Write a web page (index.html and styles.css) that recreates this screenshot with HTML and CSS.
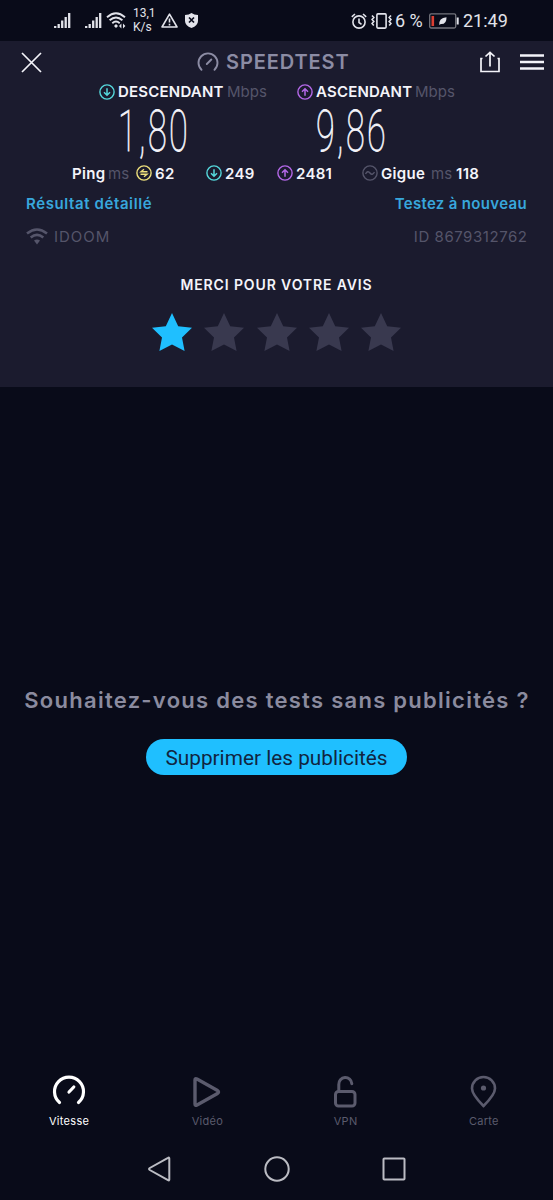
FILE: index.html
```html
<!DOCTYPE html>
<html lang="fr">
<head>
<meta charset="utf-8">
<title>Speedtest</title>
<link rel="stylesheet" href="styles.css">
</head>
<body>
<svg class="defs" width="0" height="0">
  <symbol id="signal" viewBox="0 0 17 17"><path d="M1.2 14v2M4.700 12v4M8.200 8.500v7.500M11.700 5v11M15.200 1v15" fill="none" stroke="currentColor" stroke-width="2.300"/></symbol>
  <symbol id="down" viewBox="0 0 16 16"><circle cx="8" cy="8" r="7.100" fill="none" stroke="currentColor" stroke-width="1.400"/><path d="M8 4.200v7M5 8.300l3 3 3-3" fill="none" stroke="currentColor" stroke-width="1.500"/></symbol>
  <symbol id="up" viewBox="0 0 16 16"><circle cx="8" cy="8" r="7.100" fill="none" stroke="currentColor" stroke-width="1.400"/><path d="M8 11.800v-7M5 7.700l3-3 3 3" fill="none" stroke="currentColor" stroke-width="1.500"/></symbol>
  <symbol id="star" viewBox="0 0 40 38"><path d="M20 0l6.200 13.200L40 14.800 30 24.500 32.600 38 20 31.400 7.400 38 10 24.500 0 14.800l13.800-1.600z" fill="currentColor"/></symbol>
</svg>
<header class="status">
  <svg class="sig1" width="17" height="17"><use href="#signal"/></svg>
  <svg class="sig2" width="17" height="17"><use href="#signal"/></svg>
  <svg class="swifi" width="20" height="17" viewBox="0 0 20 17" fill="none" stroke="currentColor" stroke-width="1.900"><path d="M1 5.200Q10-2.800 19 5.200M3.600 8.300Q10 2.600 16.400 8.300M6.300 11.200Q10 8 13.700 11.200"/><path d="M10 12l2 2-2 2-2-2z" fill="currentColor" stroke="none"/><path d="M15.400 11.500v5L13 14zM17 11.500v5l2.400-2.500z" fill="currentColor" stroke="none"/></svg>
  <div class="rate"><span>13,1</span><span>K/s</span></div>
  <svg class="warn" width="17" height="15" viewBox="0 0 17 15" fill="none" stroke="currentColor" stroke-width="1.600" stroke-linejoin="round"><path d="M8.500 1.200L16 14H1zM8.500 5.500v4M8.500 10.800v1.600"/></svg>
  <svg class="shield" width="13" height="15" viewBox="0 0 13 15"><path d="M6.500 0Q9 2 13 2v6q0 4.500-6.500 7Q0 12.500 0 8V2Q4 2 6.500 0z" fill="currentColor"/><path d="M4 4.500l5 5M9 4.500l-5 5" stroke="#0a0c1b" stroke-width="1.700"/></svg>
  <svg class="alarm" width="16" height="16" viewBox="0 0 16 16" fill="none" stroke="currentColor" stroke-width="1.600"><circle cx="8" cy="9" r="6.100"/><path d="M.8 3.800L4 1M15.200 3.800L12 1M8 5.500V9.500l2.500 1.800"/></svg>
  <svg class="vibrate" width="21" height="16" viewBox="0 0 21 16" fill="none" stroke="currentColor" stroke-width="1.600"><rect x="5.900" y=".9" width="9.200" height="14.200" rx="1"/><path d="M1 2.500l1.800 2L1 6.500l1.800 2L1 10.500l1.800 2M20 2.500l-1.800 2 1.800 2-1.800 2 1.800 2-1.800 2"/></svg>
  <span class="percent">6 %</span>
  <svg class="battery" width="30" height="16" viewBox="0 0 30 16"><rect x=".7" y=".8" width="26" height="14.200" rx="1.500" fill="none" stroke="#73747c" stroke-width="1.300"/><path d="M2.500 3h2.600v10H2.500z" fill="#dc3f32"/><path d="M28.700 4.500v7" stroke="#e2e3ea" stroke-width="2"/><path d="M10.300 12q-.8-7 7.200-7.800.2 7.300-5.700 6.900z" fill="#e2e3ea"/></svg>
  <time>21:49</time>
</header>
<main>
  <section class="panel">
    <div class="title">
      <svg class="close" width="21" height="21" viewBox="0 0 21 21"><path d="M1 1l19 19M20 1L1 20" stroke="currentColor" stroke-width="1.700"/></svg>
      <svg class="logo" width="22" height="20" viewBox="0 0 22 20" fill="none" stroke="currentColor" stroke-width="1.900" stroke-linecap="round"><path d="M4.500 17.800a9.500 9.500 0 1 1 13 0M9.800 12l4.500-4.500"/></svg>
      <h1>SPEEDTEST</h1>
      <svg class="share" width="20" height="22" viewBox="0 0 20 22" fill="none" stroke="currentColor" stroke-width="1.700"><path d="M2.500 7.500H1v13h18v-13h-1.500M10 15.500V1.500M5.500 5.500L10 1.300l4.500 4.200"/></svg>
      <svg class="menu" width="24" height="16" viewBox="0 0 24 16"><path d="M0 1.500h24M0 8h24M0 14.500h24" stroke="currentColor" stroke-width="2.400"/></svg>
    </div>
    <div class="speeds">
      <div class="speed">
        <div class="label"><svg class="teal" width="16" height="16"><use href="#down"/></svg><b class="desc">DESCENDANT</b><span>Mbps</span></div>
        <div class="value v1">1,80</div>
      </div>
      <div class="speed">
        <div class="label"><svg class="violet" width="16" height="16"><use href="#up"/></svg><b class="asc">ASCENDANT</b><span>Mbps</span></div>
        <div class="value v2">9,86</div>
      </div>
    </div>
    <div class="pings">
      <b class="ping">Ping</b><span class="ms1">ms</span>
      <svg class="yellow" width="16" height="16" viewBox="0 0 16 16" fill="none" stroke="currentColor" stroke-width="1.400"><circle cx="8" cy="8" r="7.100"/><path d="M11.500 6.700H5L8 4.200M4.500 9.300H11L8 11.800"/></svg><b class="n1">62</b>
      <svg class="teal" width="16" height="16"><use href="#down"/></svg><b class="n2">249</b>
      <svg class="violet" width="16" height="16"><use href="#up"/></svg><b class="n3">2481</b>
      <svg class="gray" width="16" height="16" viewBox="0 0 16 16" fill="none" stroke="currentColor" stroke-width="1.400"><circle cx="8" cy="8" r="7.100"/><path d="M3.500 9Q5.700 5 8 8t4.500-1"/></svg><b class="gigue">Gigue</b><span class="ms2">ms</span><b>118</b>
    </div>
    <div class="row links"><a>Résultat détaillé</a><a class="again">Testez à nouveau</a></div>
    <div class="row isp"><div class="net"><svg width="22" height="17" viewBox="0 0 22 17" fill="none" stroke="currentColor" stroke-width="2.600"><path d="M1 5.500Q11-2.500 21 5.500M4.700 9.600Q11 4.200 17.300 9.600"/><path d="M8 12.500q3-2 6 0L11 16.500z" fill="currentColor" stroke="none"/></svg><span class="idoom">IDOOM</span></div><span class="rid">ID 8679312762</span></div>
    <h2>MERCI POUR VOTRE AVIS</h2>
    <div class="stars">
      <svg class="on" width="40" height="38"><use href="#star"/></svg>
      <svg width="40" height="38"><use href="#star"/></svg>
      <svg width="40" height="38"><use href="#star"/></svg>
      <svg width="40" height="38"><use href="#star"/></svg>
      <svg width="40" height="38"><use href="#star"/></svg>
    </div>
  </section>
  <section class="offer">
    <p>Souhaitez-vous des tests sans publicités ?</p>
    <button>Supprimer les publicités</button>
  </section>
</main>
<nav class="tabs">
  <div class="tab active"><svg width="34" height="34" viewBox="0 0 34 34" fill="none" stroke="currentColor" stroke-width="3.200" stroke-linecap="round"><path d="M7.500 28.500a14.500 14.500 0 1 1 19 0M17 18l4.800-5"/></svg><span>Vitesse</span></div>
  <div class="tab"><svg width="34" height="34" viewBox="0 0 34 34" fill="none" stroke="currentColor" stroke-width="3.400" stroke-linejoin="round"><path d="M5 6q0-2 2-1L27.500 16.500q2 1.500 0 3L7 31q-2 1-2-1z"/></svg><span>Vidéo</span></div>
  <div class="tab"><svg width="34" height="34" viewBox="0 0 34 34" fill="none" stroke="currentColor" stroke-width="3" stroke-linecap="round"><rect x="6.500" y="17.500" width="19.500" height="14.500" rx="3"/><path d="M9.800 17v-6.500a6.500 6.500 0 0 1 13-.8"/></svg><span>VPN</span></div>
  <div class="tab"><svg width="34" height="34" viewBox="0 0 34 34" fill="none" stroke="currentColor" stroke-width="2.600"><path d="M16.500 32Q5 20.500 5 14.500a11.500 11.500 0 0 1 23 0Q28 20.500 16.500 32z"/><circle cx="16.500" cy="14" r="2.600" fill="currentColor" stroke="none"/></svg><span>Carte</span></div>
</nav>
<footer class="system">
  <svg width="26" height="28" viewBox="0 0 26 28"><path d="M22.300 3.500v21q0 1.500-1.300.7L2.800 15q-1.500-1 0-2L21 2.800q1.300-.8 1.300.7z"/></svg>
  <svg width="26" height="28" viewBox="0 0 26 28"><circle cx="13" cy="14" r="11.700"/></svg>
  <svg width="26" height="28" viewBox="0 0 26 28"><rect x="2.500" y="3.500" width="21" height="21" rx=".8"/></svg>
</footer>
</body>
</html>
```
FILE: styles.css
```css
* { box-sizing: border-box; }
body { margin: 0; width: 553px; height: 1200px; display: flex; flex-direction: column; background: #090b19; color: #f4f4fa; font-family: Inter, sans-serif; overflow: hidden; }
svg { display: block; flex: none; }
.defs { display: none; }
h1, h2, p { margin: 0; }
b { font-weight: 600; }
span, b, a, time, p, h1, h2 { white-space: nowrap; }

.status { height: 41px; flex: none; display: flex; align-items: center; color: #e2e3ea; font-family: Roboto, sans-serif; }
.sig1 { margin-left: 54px; }
.sig2 { margin-left: 14px; }
.swifi { margin-left: 4px; }
.rate { width: 29px; margin-left: 7px; display: flex; flex-direction: column; font-size: 12px; line-height: 14px; margin-top: -1px; }
.warn { margin-left: -1px; }
.shield { margin-left: 7px; }
.alarm { margin-left: 153px; }
.vibrate { margin-left: 4px; }
.percent { margin-left: 3px; width: 32px; font-size: 18px; }
.battery { margin-left: 2px; }
time { margin-left: 4px; font-size: 18px; }

.panel { height: 346px; background: #1b1b2e; display: flex; flex-direction: column; }
.title { height: 42px; display: flex; align-items: center; flex: none; }
.close { margin-left: 21px; }
.logo { margin-left: 155px; color: #8c8ca4; }
h1 { width: 124px; margin-left: 7px; font-size: 20px; font-weight: 600; letter-spacing: .9px; color: #8c8ca4; }
.share { margin-left: 130px; }
.menu { margin-left: 20px; }
.speeds { height: 75px; display: flex; padding-left: 99px; flex: none; }
.speed { width: 198px; }
.label { height: 17px; display: flex; align-items: center; font-size: 15px; }
.label b { margin-left: 3px; letter-spacing: .2px; }
.label span { color: #55556a; }
.desc { width: 109px; }
.asc { width: 99px; }
.value { margin-top: 2px; font-family: Roboto, sans-serif; font-weight: 100; font-size: 57px; line-height: 60px; letter-spacing: 4px; transform: scaleX(.6); transform-origin: left; width: 110px; -webkit-text-stroke: .8px #f4f4fa; }
.v1 { margin-left: 19px; }
.v2 { margin-left: 19px; }
.pings { height: 30px; padding-left: 72px; display: flex; align-items: center; font-size: 15px; flex: none; }
.pings b { letter-spacing: .3px; }
.pings span { color: #55556a; }
.ping { width: 36px; }
.ms1 { width: 28px; }
.pings svg + b { margin-left: 3px; }
.n1 { width: 51px; }
.n2 { width: 52px; }
.n3 { width: 66px; }
.gigue { width: 50px; }
.ms2 { width: 25px; }
.teal { color: #55d8dc; }
.violet { color: #b468e8; }
.yellow { color: #eee07c; }
.gray { color: #55556a; }
.row { display: flex; justify-content: space-between; align-items: center; padding: 0 26px; flex: none; }
.links { height: 31px; font-size: 15px; font-weight: 600; letter-spacing: .6px; color: #38a7dc; }
.again { letter-spacing: .33px; }
.isp { height: 35px; font-size: 15px; color: #55556a; }
.net { display: flex; align-items: center; gap: 6px; }
.idoom { letter-spacing: 1px; }
.rid { letter-spacing: .55px; margin-right: -.5px; }
h2 { margin-top: 21px; height: 20px; line-height: 20px; font-size: 14px; font-weight: 600; letter-spacing: .88px; text-align: center; }
.stars { display: flex; justify-content: center; gap: 12.200px; margin-top: 18px; color: #39394f; }
.on { color: #1fbfff; }

main { height: 1021px; }
.offer { padding-top: 297px; display: flex; flex-direction: column; align-items: center; }
.offer p { font-size: 22px; line-height: 32px; font-weight: 600; letter-spacing: 1.270px; margin-right: -1px; color: #8b8b9f; }
button { margin-top: 23px; width: 261px; height: 36px; border: 0; border-radius: 18px; background: #1fbfff; color: #11253f; font: 20.800px/36px Roboto, sans-serif; padding: 1px 0 0; white-space: nowrap; }

.tabs { height: 78px; flex: none; display: flex; padding-top: 12px; }
.tab { flex: 1; display: flex; flex-direction: column; align-items: center; color: #5b5b6d; font-size: 11px; line-height: 14px; letter-spacing: .3px; }
.tab span { margin-top: 6px; }
.active { color: #fff; }
.system { height: 60px; flex: none; display: flex; justify-content: center; gap: 91px; padding-top: 15px; }
.system svg { fill: none; stroke: #bbbcc3; stroke-width: 2; }
```
